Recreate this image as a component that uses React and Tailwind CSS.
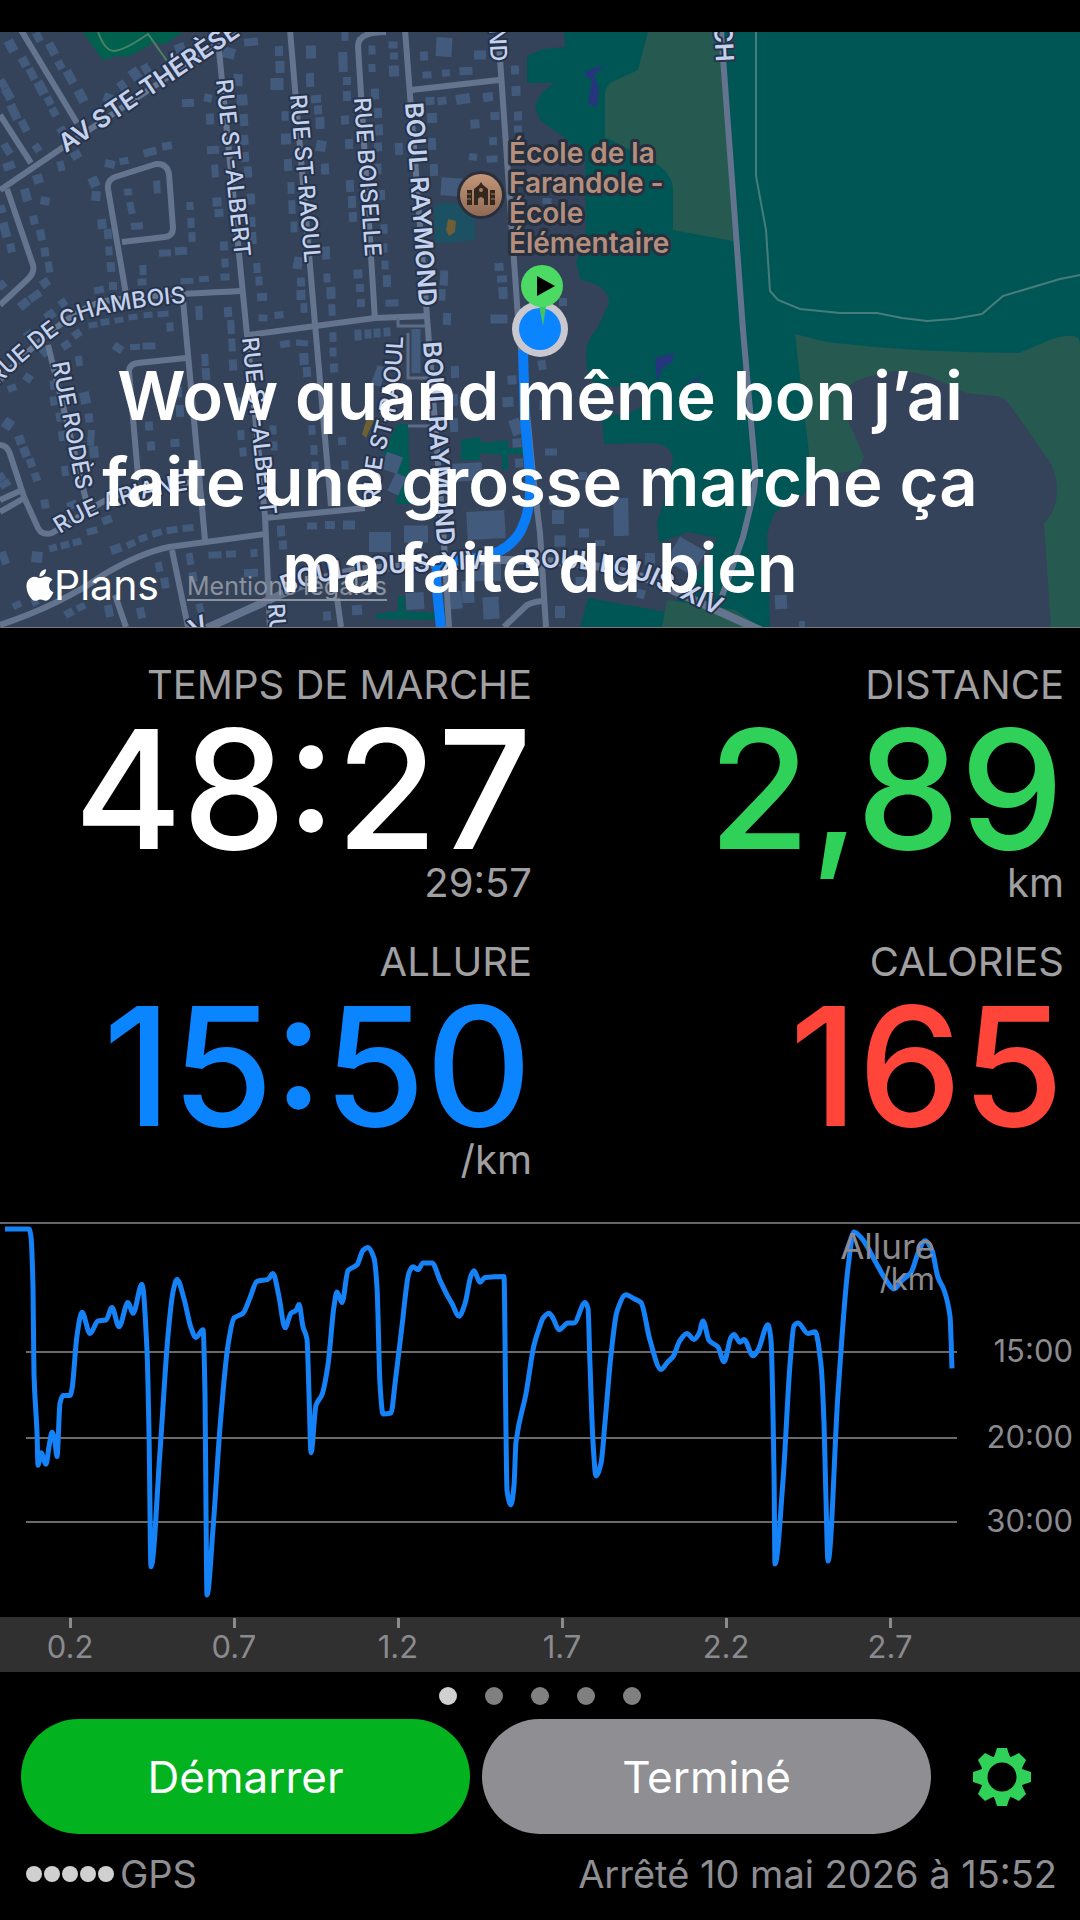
import React, { useState } from 'react'
import { IoLogoApple } from 'react-icons/io5'

const roads = [
  'M21 30L77 123', 'M0 190L62 148L241 28', 'M0 115L31 163',
  'M7 189L33 265Q35 273 27 280L0 305',
  'M127 300L108 189Q107 180 115 177L156 164Q167 163 169 174L173 228Q173 236 165 237L122 242',
  'M218 40L247 335L265 516L270 627', 'M290 30L315 324L331 506',
  'M386 32Q358 32 358 46L375 320', 'M405 30L428 330L444 543L449 627',
  'M411 90L499 80', 'M498 30L518 318L533 475L540 533L546 627',
  'M0 380Q60 316 100 302Q130 296 241 291', 'M183 300L205 540',
  'M186 358L138 363Q129 364 129 372L138 476', 'M248 335L375 318L428 316',
  'M0 445Q7 445 10 454L24 497L38 528Q42 536 52 533L90 510Q120 486 196 482',
  'M0 512L26 497', 'M0 500L22 490', 'M48 345L86 500',
  'M0 625Q60 605 103 575Q140 553 169 547L265 534', 'M265 518L365 508',
  'M172 550L188 627', 'M115 595L126 627', 'M337 598L341 627',
  'M504 627L527 605Q535 601 545 601', 'M721 30L743 330L755 467Q756 485 752 500L743 537L722 596',
]

const lanes = ['M398 318V326H426', 'M408 333V378H428', 'M408 426H430']

// x, y, w, h, angle
const buildings = [
  [11, 46, 10, 12, -28], [38, 37, 8, 10, -28], [52, 49, 9, 13, -28], [24, 62, 9, 10, -28], [60, 65, 8, 9, -28],
  [32, 74, 8, 12, -28], [41, 88, 10, 14, -28], [49, 101, 8, 9, -28], [70, 77, 9, 14, -28], [81, 96, 10, 13, -28],
  [54, 112, 8, 9, -28], [8, 94, 9, 12, -30], [3, 84, 8, 10, -30], [14, 112, 9, 16, -25], [24, 126, 8, 12, -28],
  [62, 131, 9, 8, -30], [37, 148, 8, 8, -35], [7, 149, 8, 12, -32], [9, 166, 12, 8, -20], [61, 166, 7, 10, -15],
  [76, 155, 10, 8, -30], [135, 74, 10, 12, -35], [146, 69, 8, 10, -30], [124, 88, 8, 16, -35], [108, 98, 9, 9, 20],
  [180, 48, 10, 9, -20], [229, 53, 12, 11, 15], [251, 42, 14, 8, -5], [188, 103, 12, 8, -3],
  [208, 98, 8, 8, 10], [238, 80, 9, 12, 2], [242, 100, 11, 11, -3], [210, 119, 8, 11, -3], [244, 120, 8, 12, -3],
  [213, 150, 12, 8, -3], [244, 140, 9, 10, -3], [245, 157, 8, 10, -3], [215, 171, 7, 13, -3], [248, 172, 8, 11, -3],
  [217, 202, 9, 9, -3], [219, 213, 9, 8, -3], [251, 199, 8, 11, -3], [251, 222, 9, 10, -3], [224, 246, 8, 9, -3],
  [253, 238, 7, 12, -3], [225, 263, 7, 9, -3], [225, 277, 9, 7, -3], [257, 268, 7, 10, -3], [259, 281, 7, 9, -3],
  [262, 297, 10, 8, -3], [228, 312, 8, 10, -3], [263, 318, 9, 7, 3], [279, 315, 9, 7, -5],
  [279, 51, 8, 10, -2], [280, 67, 9, 12, -2], [277, 84, 13, 12, 0], [311, 52, 10, 13, -2], [310, 80, 8, 14, -2],
  [316, 99, 10, 8, -2], [285, 116, 7, 10, -2], [318, 110, 8, 9, -2], [320, 123, 9, 12, -2], [286, 139, 10, 11, -2],
  [321, 146, 10, 11, 10], [288, 165, 8, 12, -2], [325, 169, 8, 11, -2], [291, 188, 7, 12, -2], [292, 207, 7, 14, -2],
  [294, 227, 7, 11, -2], [326, 253, 8, 13, -2], [298, 263, 9, 12, 10], [301, 282, 8, 9, -2], [327, 278, 7, 9, -2],
  [301, 295, 9, 10, -2], [331, 293, 9, 12, -2], [304, 308, 7, 10, -2], [332, 310, 7, 12, -2],
  [345, 36, 7, 10, -2], [343, 62, 9, 20, -2], [372, 50, 7, 9, -2], [372, 68, 7, 8, -2], [347, 81, 8, 8, 0],
  [347, 96, 8, 10, -2], [375, 94, 8, 11, -2], [378, 113, 8, 10, -2], [345, 120, 8, 9, -2], [379, 130, 8, 11, -2],
  [349, 144, 8, 10, -2], [378, 147, 8, 9, -2], [378, 169, 7, 11, -2], [350, 186, 8, 12, -2], [381, 195, 8, 10, -2],
  [352, 202, 8, 12, -2], [353, 217, 8, 10, -2], [384, 229, 7, 10, -2], [384, 248, 7, 9, -2], [358, 274, 9, 9, -2],
  [360, 288, 8, 8, -2], [361, 303, 8, 8, -2], [385, 265, 7, 9, -2], [387, 281, 8, 12, -2], [392, 303, 13, 7, -2],
  [393, 45, 9, 7, 0], [394, 56, 8, 7, 0], [394, 71, 10, 11, -2], [424, 56, 8, 9, -3], [444, 47, 16, 19, 3],
  [480, 55, 12, 9, 0], [427, 75, 9, 7, -3], [446, 73, 8, 7, -3], [466, 71, 13, 8, -3], [430, 101, 9, 8, -3],
  [442, 101, 9, 8, -6], [463, 99, 14, 10, -8], [488, 97, 10, 9, -8], [432, 118, 10, 10, -3], [475, 124, 9, 9, -3],
  [495, 116, 9, 8, -3], [399, 149, 8, 12, -3], [432, 144, 8, 12, -3], [493, 141, 8, 8, -3], [473, 157, 8, 7, 8],
  [492, 159, 11, 7, -3], [434, 170, 8, 12, -2], [452, 187, 22, 18, 4], [515, 70, 8, 9, -2], [516, 91, 9, 10, -2],
  [518, 116, 8, 9, -2], [518, 129, 8, 7, -2], [444, 278, 8, 15, 2], [442, 295, 7, 12, 2], [447, 319, 8, 12, 2],
  [499, 267, 9, 8, -3], [502, 279, 10, 7, -3], [503, 293, 9, 12, -3], [499, 319, 17, 9, 0],
  [128, 192, 8, 7, -5], [157, 187, 7, 13, -3], [131, 208, 7, 12, -12], [137, 226, 12, 7, -5],
  [110, 164, 10, 8, 12], [124, 161, 9, 7, -10], [150, 152, 13, 8, -15], [167, 146, 10, 8, -10],
  [38, 179, 10, 9, -15], [94, 182, 10, 10, -25], [96, 196, 9, 10, 5], [26, 195, 9, 13, -15], [45, 201, 9, 8, 10],
  [34, 220, 8, 9, -12], [5, 230, 9, 15, -15], [2, 209, 7, 8, -15], [41, 235, 8, 11, -12], [11, 248, 8, 9, -12],
  [45, 252, 8, 9, -8], [49, 267, 7, 11, -8], [45, 283, 9, 9, -35], [2, 285, 8, 8, -40], [102, 224, 9, 10, -6],
  [108, 234, 8, 10, -5], [109, 251, 7, 9, -5], [111, 267, 8, 10, -5], [143, 270, 7, 10, -3], [142, 282, 9, 7, -3],
  [190, 206, 7, 8, -2], [191, 223, 7, 10, -2], [192, 237, 7, 10, -2], [165, 253, 12, 7, -3], [181, 251, 12, 8, -3],
  [187, 281, 13, 6, -3], [204, 279, 10, 6, -3], [99, 290, 10, 7, -10], [113, 286, 8, 8, 0],
  [24, 304, 11, 9, -40], [35, 296, 13, 8, -35], [50, 315, 11, 9, -35], [63, 303, 8, 8, -35],
  [93, 325, 9, 6, -8], [105, 322, 9, 7, -8], [119, 320, 9, 6, -8], [133, 317, 9, 6, -6], [148, 315, 9, 6, -6],
  [163, 314, 11, 6, -4], [170, 327, 7, 9, -3], [199, 313, 7, 14, -3], [77, 334, 9, 8, -35], [66, 345, 9, 8, -35],
  [118, 348, 10, 8, 35], [135, 347, 10, 6, -3], [149, 346, 13, 7, -3], [205, 360, 7, 12, -3], [206, 374, 8, 12, -5],
  [29, 335, 9, 9, -35], [28, 378, 9, 8, 35], [12, 388, 9, 7, -20], [79, 361, 7, 10, -8], [44, 352, 7, 10, -40],
  [54, 385, 8, 9, -8], [54, 401, 8, 9, -8], [85, 398, 10, 12, -12], [89, 418, 8, 9, -5], [60, 417, 8, 9, -8],
  [91, 438, 7, 16, 3], [62, 436, 7, 10, -8], [65, 471, 7, 10, -8], [94, 452, 9, 12, -5], [8, 424, 10, 11, 35],
  [20, 440, 9, 9, -20], [25, 452, 9, 10, -20], [31, 463, 8, 9, -20], [36, 477, 8, 9, -20], [5, 484, 11, 7, -30],
  [45, 504, 8, 9, -8], [1, 477, 8, 8, -30], [149, 426, 8, 9, -3], [151, 446, 8, 9, -3], [175, 443, 9, 8, -3],
  [180, 411, 8, 12, -3], [178, 392, 8, 11, -3], [72, 505, 10, 8, -20], [107, 520, 10, 8, -20], [92, 531, 11, 7, -15],
  [53, 548, 8, 7, -15], [65, 545, 9, 7, -15], [77, 542, 9, 7, -15], [37, 557, 11, 11, 5], [116, 549, 11, 9, -20],
  [131, 544, 9, 7, -25], [143, 538, 9, 7, -20], [157, 533, 10, 7, -15], [172, 530, 11, 7, -8], [188, 528, 11, 7, -5],
  [4, 558, 8, 13, -20], [17, 605, 9, 7, -25], [35, 602, 7, 7, -25], [69, 613, 9, 8, -30], [81, 607, 9, 7, -25],
  [109, 611, 8, 12, -12], [141, 613, 8, 11, -12], [159, 567, 7, 10, -10], [165, 583, 8, 11, -10],
  [190, 559, 7, 12, -10], [193, 577, 8, 10, -10], [200, 608, 7, 9, -15], [215, 555, 13, 7, -3],
  [231, 554, 10, 7, -3], [254, 553, 7, 8, -3], [251, 573, 14, 8, -3], [281, 531, 8, 11, -3], [283, 545, 8, 9, -3],
  [231, 327, 7, 14, -3], [232, 345, 7, 13, -3], [233, 365, 8, 11, -3], [238, 403, 7, 11, -3], [241, 435, 7, 10, -3],
  [243, 452, 7, 9, -3], [285, 344, 10, 7, -8], [302, 343, 12, 6, 4], [304, 359, 9, 12, -3], [307, 372, 8, 10, -3],
  [333, 337, 7, 10, -2], [333, 352, 7, 9, -2], [334, 368, 8, 9, -2], [312, 430, 7, 10, -2], [314, 450, 7, 10, -2],
  [315, 466, 7, 9, -2], [273, 430, 7, 9, -2], [274, 446, 7, 9, -2], [342, 441, 8, 8, -2], [345, 465, 7, 9, -2],
  [312, 526, 10, 7, 0], [330, 525, 10, 8, 0], [349, 525, 12, 9, 0], [358, 335, 7, 11, -3], [368, 334, 7, 9, -3],
  [377, 333, 7, 9, -3], [387, 332, 7, 9, -3], [416, 351, 9, 44, 0], [379, 376, 10, 20, 20], [392, 463, 17, 18, 20],
  [397, 484, 12, 20, 25], [380, 542, 22, 20, 0], [416, 534, 24, 17, 0], [486, 525, 38, 28, -3], [467, 472, 30, 18, -3],
  [488, 569, 26, 24, 0], [415, 601, 18, 17, -3], [456, 600, 12, 18, -5], [491, 608, 16, 22, -3], [468, 592, 12, 22, -3],
  [512, 380, 9, 9, -3], [508, 402, 11, 10, -3], [516, 427, 11, 16, -20], [517, 443, 9, 9, -3], [519, 463, 8, 9, -3],
  [455, 372, 8, 12, -2], [454, 400, 8, 12, -2], [454, 425, 8, 14, -2], [327, 616, 8, 9, -3], [357, 610, 10, 10, -3],
  [542, 365, 8, 10, -10], [543, 405, 7, 10, 0], [551, 452, 12, 7, 0], [583, 476, 8, 8, 0], [554, 500, 10, 9, 0],
  [558, 517, 12, 14, 0], [621, 517, 15, 38, -1], [584, 533, 10, 9, 0], [560, 541, 11, 11, 0], [600, 543, 10, 6, 0],
  [650, 559, 10, 12, 0], [686, 556, 30, 28, 30], [622, 585, 8, 8, 10], [641, 594, 8, 9, 15], [560, 612, 10, 12, 0],
  [781, 602, 12, 14, -3], [802, 625, 6, 8, 0], [580, 581, 9, 8, 0], [563, 302, 8, 8, 0], [547, 201, 9, 6, 0],
]

// pace samples along the walk: x, depth below the top rule
const pace = [
  [5, 30], [29, 30], [31, 38], [33, 90], [34, 180], [37, 240], [38, 274], [41, 261], [46, 273], [49, 255], [52, 240],
  [55, 250], [57, 265], [60, 210], [63, 202], [70, 202], [72, 195], [77, 140], [82, 116], [90, 138], [98, 125],
  [106, 124], [112, 111], [119, 131], [128, 106], [133, 117], [142, 87], [147, 155], [149, 240], [151, 379],
  [160, 260], [168, 140], [173, 95], [177, 82], [184, 102], [191, 132], [196, 142], [203, 134], [205, 200],
  [206, 320], [207, 408], [213, 340], [220, 235], [228, 150], [234, 122], [243, 117], [250, 101], [257, 84],
  [268, 82], [273, 76], [279, 100], [285, 132], [291, 117], [296, 114], [299, 108], [303, 131], [307, 144],
  [309, 200], [311, 261], [316, 212], [322, 201], [328, 170], [334, 110], [337, 95], [342, 106], [348, 73],
  [357, 67], [363, 52], [368, 49], [374, 60], [377, 90], [380, 190], [383, 221], [391, 220], [395, 190],
  [402, 130], [409, 75], [413, 69], [418, 72], [423, 65], [432, 65], [440, 83], [447, 98], [452, 107], [459, 120],
  [465, 107], [471, 78], [474, 73], [480, 85], [485, 80], [504, 79], [506, 240], [507, 300], [511, 315],
  [514, 295], [516, 250], [526, 200], [534, 150], [540, 130], [543, 122], [549, 117], [553, 122], [559, 134],
  [568, 127], [574, 127], [585, 106], [588, 112], [590, 170], [593, 250], [596, 285], [601, 272], [605, 230],
  [611, 160], [617, 115], [626, 98], [634, 102], [641, 106], [650, 145], [661, 175], [668, 167], [673, 162],
  [680, 145], [687, 138], [694, 144], [699, 138], [703, 125], [709, 145], [718, 152], [724, 167], [731, 142],
  [734, 139], [740, 147], [744, 144], [753, 161], [758, 155], [768, 129], [771, 145], [774, 280], [775, 376],
  [783, 290], [790, 170], [794, 130], [798, 127], [808, 138], [815, 136], [821, 170], [824, 230], [826, 310],
  [828, 373], [838, 200], [848, 70], [854, 33], [862, 40], [875, 63], [885, 81], [894, 92], [902, 83], [911, 75],
  [918, 55], [925, 42], [932, 52], [938, 80], [944, 93], [950, 120], [952, 174],
].map(([x, v]) => [x, v * 0.968 - 22])

// smooth curve that never overshoots its samples
function monotonePath(pts) {
  const slope = (a, b) => (b[1] - a[1]) / (b[0] - a[0])
  const m = pts.map((p, i) => {
    if (i === 0 || i === pts.length - 1) return i === 0 ? slope(p, pts[1]) : slope(pts[i - 1], p)
    const a = slope(pts[i - 1], p)
    const b = slope(p, pts[i + 1])
    return a * b <= 0 ? 0 : (2 * a * b) / (a + b)
  })
  let d = `M${pts[0][0]} ${pts[0][1]}`
  for (let i = 1; i < pts.length; i++) {
    const [x0, y0] = pts[i - 1]
    const [x1, y1] = pts[i]
    const h = (x1 - x0) / 3
    d += `C${x0 + h} ${y0 + m[i - 1] * h} ${x1 - h} ${y1 - m[i] * h} ${x1} ${y1}`
  }
  return d
}

const streets = [
  ['AV STE-THÉRÈSE', 66, 153, -34, 'text-[25px] font-semibold'],
  ['RUE ST-ALBERT', 216, 80, 84, 'text-[23px] font-medium'],
  ['RUE ST-RAOUL', 290, 95, 85, 'text-[23px] font-medium'],
  ['RUE BOISELLE', 354, 98, 86, 'text-[23px] font-medium'],
  ['BOUL RAYMOND', 405, 103, 86, 'text-[25px] font-semibold'],
  ['RUE ST-ALBERT', 242, 338, 84, 'text-[23px] font-medium'],
  ['BOUL RAYMOND', 423, 342, 86, 'text-[25px] font-semibold'],
  ['RUE RODÈS', 52, 363, 79, 'text-[23px] font-medium'],
  ['ND', 489, 28, 87, 'text-[23px] font-medium'],
  ['CH', 714, 25, 87, 'text-[25px] font-semibold'],
  ['RUE', 268, 604, 86, 'text-[23px] font-medium'],
  ['V', 194, 638, -25, 'text-[25px] font-semibold'],
]

const curved = [
  ['chambois', 'M-3 386Q40 345 65 329Q95 308 210 301', 'RUE DE CHAMBOIS', 'text-[23px] font-medium'],
  ['ariane', 'M60 534Q110 500 200 488', 'RUE ARIANE', 'text-[23px] font-medium'],
  ['raoul', 'M381 503Q378 465 390 435Q402 395 404 310', 'RUE ST-RAOUL', 'text-[23px] font-medium'],
  ['louis-a', 'M284 594Q330 576 380 574L530 566', 'BOUL LOUIS-XIV', 'text-[25px] font-semibold'],
  ['louis-b', 'M524 568Q600 565 650 584L760 635', 'BOUL LOUIS-XIV', 'text-[25px] font-semibold'],
]

function RouteMap() {
  return (
    <svg viewBox="0 32 1080 595" className="w-full h-auto" role="img" aria-label="Trajet">
      <defs>
        <linearGradient id="school" x2="0" y2="1">
          <stop offset="0" stopColor="#c39677" />
          <stop offset="1" stopColor="#8f6a54" />
        </linearGradient>
      </defs>
      <rect y="32" width="1080" height="595" fill="#34435a" />
      <path d="M83 32L103 60L116 56L128 57L155 42L165 44L183 32Z" fill="#00614f" />
      <path d="M98 32Q105 51 114 51Q125 50 148 34L167 61" fill="none" stroke="#4a8068" strokeWidth="2" />
      <path d="M0 508L22 497V502L0 514Z" fill="#00614f" />
      <path d="M398 424H408L411 504H396L400 478L382 452ZM461 440L480 437L482 443L508 440V448H524V454H508V470H502V455L480 453V460H461ZM398 596H405V611L435 613V620L376 619V614L398 611Z" fill="#005a56" />
      <path d="M564 32L565 47L543 49L527 56V83H545L554 82L540 95L535 107L540 120L564 137L585 160L586 230L576 263L581 280Q609 285 609 303L597 329Q586 340 586 354L588 377L597 385L631 388Q645 391 645 402Q640 414 602 416L604 444L654 443Q673 446 673 460L664 500L657 523L659 543L688 532L717 538L705 563L667 612L588 598L580 627H1080V32Z" fill="#005655" />
      <path d="M648 32L638 70L612 82Q605 86 605 95V137L650 160Q673 172 673 190V230L733 241L720 32ZM795 334L826 342Q919 353 1019 353L1050 340Q1080 330 1080 344V627H900V480H808L809 453ZM667 600L662 627H760L735 610Z" fill="#265a50" />
      <path d="M884 373Q845 380 845 395L846 416L864 457L858 470L819 476L803 495L774 513L767 534L770 627H1051L1044 523Q1057 510 1057 490Q1057 475 1050 462L1010 405Q1004 396 994 396L967 393L936 379Q905 367 884 373Z" fill="#34435a" />
      <path d="M604 65L586 71L585 75L592 80L588 104L597 107L599 88L594 76ZM675 353L655 358L657 382L662 368L671 363ZM703 374L684 387L688 392Z" fill="#25367c" />
      <path d="M444 202L475 207V240L434 244V206Z" fill="#1b5162" />
      <path d="M448 219L456 221L455 232L449 236L446 230Z" fill="#6e5f35" />
      <path d="M368 415L374 420L366 438L362 434Z" fill="#6e5f35" />
      <g fill="#425a7b">
        {buildings.map(([x, y, w, h, a], i) => (
          <rect key={i} x={x - w / 2} y={y - h / 2} width={w} height={h} transform={`rotate(${a} ${x} ${y})`} />
        ))}
      </g>
      <g fill="none" stroke="#64748e" strokeWidth="6" strokeLinejoin="round">
        {roads.map(d => <path key={d} d={d} />)}
        <path d="M205 629L269 600Q330 570 379 568L499 560Q600 560 650 580L762 631" strokeWidth="8" />
      </g>
      <g fill="none" stroke="#5c6c86" strokeWidth="3">
        {lanes.map(d => <path key={d} d={d} />)}
      </g>
      <path d="M756 32V176L766 230L770 291L778 300L800 309L840 313H877L902 318L927 321L953 319L982 314L1003 296L1060 279L1080 275" fill="none" stroke="#467c7a" strokeWidth="2" />
      <path d="M523 350L525 420L530 476Q532 510 520 532Q508 552 482 557L448 562Q435 564 436 580L441 628" fill="none" stroke="#0a7cf5" strokeWidth="10" />

      <g fill="#c5d2ee" stroke="#26334a" strokeWidth="4" strokeLinejoin="round" paintOrder="stroke">
        {streets.map(([name, x, y, a, cls], i) => (
          <text key={i} className={cls} transform={`translate(${x} ${y}) rotate(${a})`}>{name}</text>
        ))}
        {curved.map(([id, d, name, cls]) => (
          <React.Fragment key={id}>
            <path id={id} d={d} fill="none" stroke="none" />
            <text className={cls}><textPath href={`#${id}`}>{name}</textPath></text>
          </React.Fragment>
        ))}
      </g>

      <g className="text-[28px] font-semibold" fill="#b58f7c" stroke="#26303f" strokeWidth="6" strokeLinejoin="round" paintOrder="stroke">
        <text x="509" y="163">École de la</text>
        <text x="509" y="193">Farandole -</text>
        <text x="509" y="223">École</text>
        <text x="509" y="253">Élémentaire</text>
      </g>
      <circle cx="481" cy="195" r="24" fill="#2b2f3c" />
      <circle cx="481" cy="195" r="21" fill="url(#school)" />
      <path d="M481 182L483 185L488 189V205H484V199Q481 195 478 199V205H474V189L479 185Z" fill="#33271e" />
      <path d="M467 190H472V205H467ZM490 190H495V205H490Z" fill="#33271e" />
      <path d="M467 194H471M467 199H471M491 194H495M491 199H495" stroke="#a87d62" />
      <circle cx="481" cy="190" r="2" fill="#a87d62" />

      <circle cx="540" cy="329" r="28" fill="#c9c8cf" />
      <circle cx="540" cy="329" r="21" fill="#0a84ff" />
      <path d="M538 300H547L543 326Z" fill="#42c463" />
      <circle cx="542" cy="286" r="21" fill="#4cd964" />
      <path d="M537 276L555 286L537 296Z" fill="#000" />
    </svg>
  )
}

function Stat({ label, value, unit, color, pad }) {
  return (
    <div className={`flex flex-col items-end text-[#a0a0a3] ${pad}`}>
      <div className="text-[40px] leading-[50px]">{label}</div>
      <div className={`text-[165px] leading-[158px] font-medium ${color}`}>{value}</div>
      <div className="text-[40px] leading-[30px] h-[30px]">{unit}</div>
    </div>
  )
}

function PaceChart() {
  const grid = [[130, '15:00'], [216, '20:00'], [300, '30:00']]
  const ticks = ['0.2', '0.7', '1.2', '1.7', '2.2', '2.7']
  return (
    <svg viewBox="0 0 1080 450" className="w-full h-auto text-[31px]" role="img" aria-label="Allure par km">
      <rect width="1080" height="2" fill="#66666a" />
      <rect y="395" width="1080" height="55" fill="#303030" />
      {grid.map(([y, name]) => (
        <g key={name}>
          <rect x="26" y={y - 1} width="931" height="2" fill="#6a6a6c" />
          <text x="1073" y={y + 10} textAnchor="end" fill="#8a8a8f">{name}</text>
        </g>
      ))}
      <path d={monotonePath(pace)} fill="none" stroke="#1583f7" strokeWidth="5" strokeLinejoin="round" />
      <text x="935" y="37" textAnchor="end" fill="#8a8a8f" className="text-[35px]">Allure</text>
      <text x="935" y="68" textAnchor="end" fill="#8a8a8f">/km</text>
      {ticks.map((name, i) => (
        <g key={name}>
          <rect x={69 + i * 164} y="396" width="3" height="10" fill="#8a8a8f" />
          <text x={70 + i * 164} y="436" textAnchor="middle" fill="#8a8a8f">{name}</text>
        </g>
      ))}
    </svg>
  )
}

function Gear() {
  const teeth = [0, 45, 90, 135, 180, 225, 270, 315]
  return (
    <svg viewBox="-29 -29 58 58" className="w-[58px] h-[58px]" fill="#30d158">
      {teeth.map(a => <path key={a} d="M-9 -18Q-7 -22 -5 -29H5Q7 -22 9 -18Z" transform={`rotate(${a})`} />)}
      <circle r="18" fill="none" stroke="#30d158" strokeWidth="7" />
    </svg>
  )
}

export default function App() {
  const [page, setPage] = useState(0)

  return (
    <main className="min-h-screen bg-black pt-8 font-['Inter',sans-serif]">
      <section className="relative border-b border-[#77777c] overflow-hidden">
        <RouteMap />
        <div className="absolute left-[22px] bottom-[18px] flex items-end gap-7">
          <div className="flex items-center text-white text-[41px] leading-[48px]">
            <IoLogoApple className="w-9 h-9 -mr-1" />
            Plans
          </div>
          <a href="#mentions" className="text-[25px] leading-[26px] mb-2 text-[#8b929e] border-b-2 border-[#8b929e]">Mentions légales</a>
        </div>
        <p className="absolute inset-x-0 bottom-4 text-center text-white text-[67px] leading-[86px] font-semibold">
          Wow quand même bon j’ai<br />faite une grosse marche ça<br />ma faite du bien
        </p>
      </section>

      <section className="grid grid-cols-2 gap-y-[39px] pt-8 pb-[47px]">
        <Stat label="TEMPS DE MARCHE" value="48:27" unit="29:57" color="text-white" pad="pr-2" />
        <Stat label="DISTANCE" value="2,89" unit="km" color="text-[#30d158]" pad="pr-4" />
        <Stat label="ALLURE" value="15:50" unit="/km" color="text-[#0a84ff]" pad="pr-2" />
        <Stat label="CALORIES" value="165" unit="" color="text-[#ff453a]" pad="pr-4" />
      </section>

      <PaceChart />

      <nav className="flex justify-center items-center gap-7 h-[47px]">
        {[0, 1, 2, 3, 4].map(i => (
          <button
            key={i}
            aria-label={`Page ${i + 1}`}
            onClick={() => setPage(i)}
            className={`w-[18px] h-[18px] rounded-full ${i === page ? 'bg-[#d0d0d0]' : 'bg-[#808080]'}`}
          />
        ))}
      </nav>

      <div className="flex items-center gap-3 pl-[21px] pr-5 text-white text-[44px]">
        <button className="flex-1 h-[115px] rounded-full bg-[#02b21e]">Démarrer</button>
        <button className="flex-1 h-[115px] rounded-full bg-[#8e8e93]">Terminé</button>
        <button aria-label="Réglages" className="w-[117px] h-[115px] flex items-center justify-center">
          <Gear />
        </button>
      </div>

      <footer className="flex items-center justify-between pl-[26px] pr-[23px] text-[38px] leading-[80px] text-[#8e8e93]">
        <div className="flex items-center">
          <div className="flex gap-[2px] mr-[6px]">
            {[0, 1, 2, 3, 4].map(i => <span key={i} className="w-4 h-4 rounded-full bg-[#d0d0d0]" />)}
          </div>
          GPS
        </div>
        <div>Arrêté 10 mai 2026 à 15:52</div>
      </footer>
    </main>
  )
}
